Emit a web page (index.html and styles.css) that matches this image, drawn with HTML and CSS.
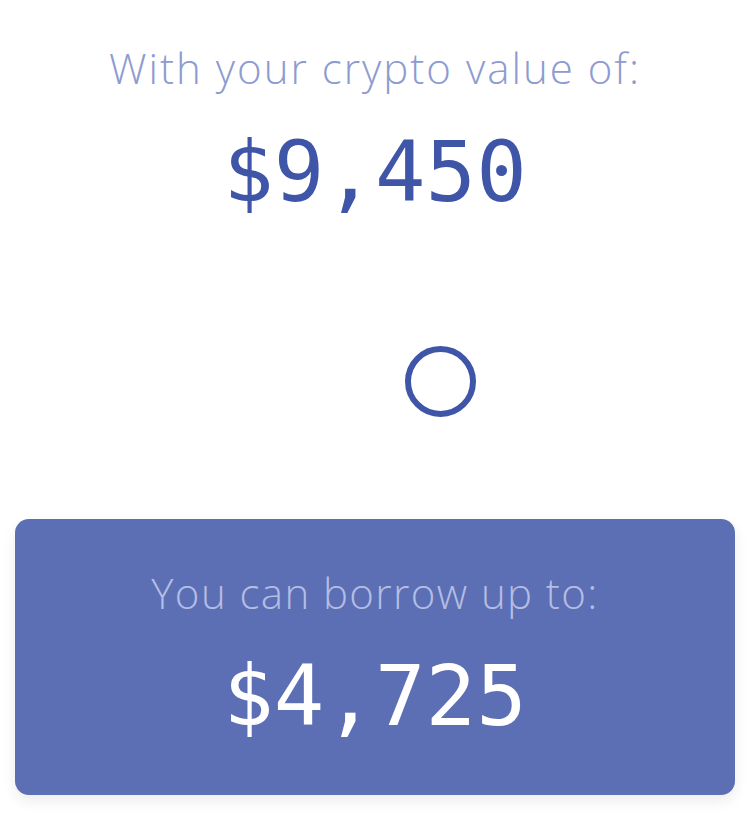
FILE: index.html
```html
<!DOCTYPE html>
<html>
<head>
<meta charset="utf-8">
<link rel="stylesheet" href="styles.css">
</head>
<body>
<main class="page">
  <section class="value">
    <p class="label">With your crypto value of:</p>
    <p class="amount">$9,450</p>
  </section>
  <div class="slider">
    <span class="thumb"></span>
  </div>
  <section class="card">
    <p class="label label-card">You can borrow up to:</p>
    <p class="amount amount-card">$4,725</p>
  </section>
</main>
</body>
</html>
```
FILE: styles.css
```css
html, body {
  margin: 0;
  padding: 0;
  background: #ffffff;
}
.page {
  width: 750px;
  height: 819px;
  box-sizing: border-box;
  padding: 40px 15px 0;
  display: flex;
  flex-direction: column;
  align-items: stretch;
}
.value {
  display: flex;
  flex-direction: column;
  align-items: center;
}
p { margin: 0; }
.label {
  font-family: "Open Sans", sans-serif;
  font-weight: 300;
  font-size: 42px;
  letter-spacing: 2px;
  line-height: 56px;
  color: #8d9bd0;
  text-align: center;
}
.amount {
  font-family: "DejaVu Sans Mono", monospace;
  font-size: 84px;
  line-height: 100px;
  color: #3f55a8;
  text-align: center;
  margin-top: 26px;
}
.slider {
  flex: none;
  height: 276px;
  margin-top: 21px;
  display: flex;
  align-items: center;
  justify-content: center;
  padding-left: 130px;
}
.thumb {
  width: 59px;
  height: 59px;
  border: 6px solid #3f55a8;
  border-radius: 50%;
  background: #fff;
}
.card {
  flex: none;
  height: 276px;
  background: #5c6fb4;
  border-radius: 14px;
  box-shadow: 0 6px 14px rgba(0,0,0,0.08);
  display: flex;
  flex-direction: column;
  align-items: center;
  padding-top: 46px;
  box-sizing: border-box;
}
.label-card {
  color: #b4bde3;
  letter-spacing: 1.4px;
}
.amount-card {
  color: #ffffff;
  margin-top: 25px;
}
```
